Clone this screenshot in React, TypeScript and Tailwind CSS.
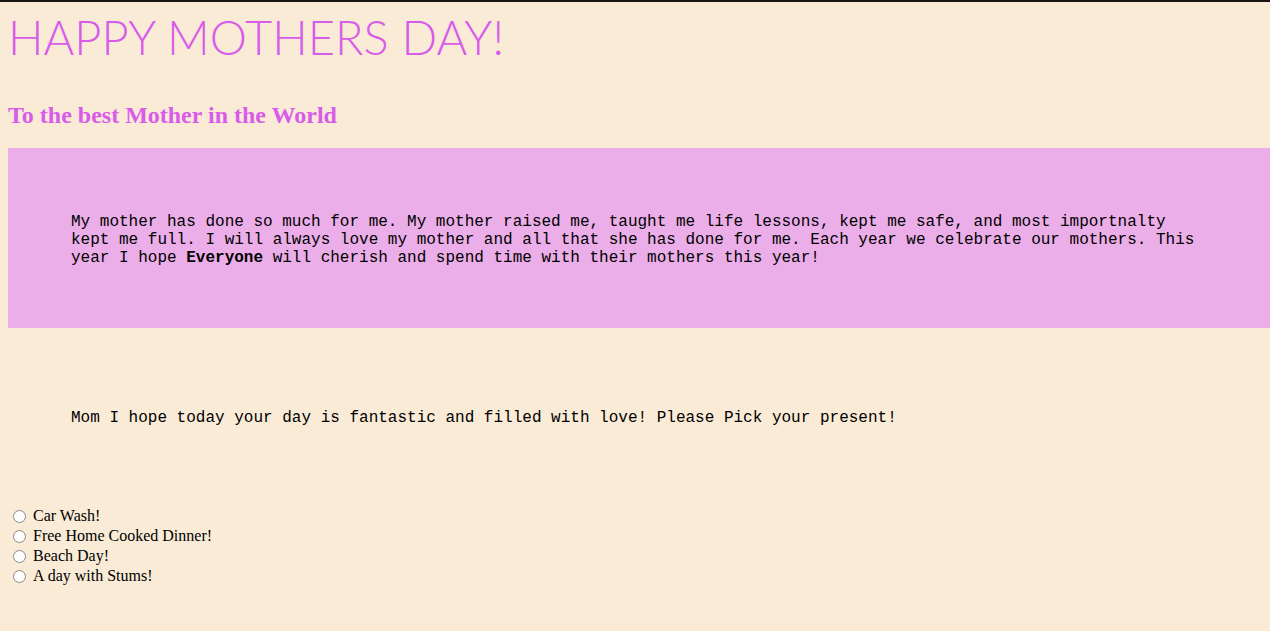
export default function App() {
  const options = ["Car Wash!", "Free Home Cooked Dinner!", "Beach Day!", "A day with Stums!"];
  return (
    <div className="min-h-[631px] bg-[#faebd7] border-t-2 border-[#1c1515] overflow-hidden">
      <div className="px-2">
        <h1 className="text-[47px] leading-[58px] text-[#d95ce9] mt-[6px] font-light font-['Lato','Open_Sans',sans-serif]">
          HAPPY MOTHERS DAY!
        </h1>
        <h2 className="text-[24px] leading-[28px] font-bold text-[#d95ce9] mt-[35px] font-['Liberation_Serif',serif]">
          To the best Mother in the World
        </h2>
        <div className="mt-[19px] mr-[-8px] bg-[#ebaee8] px-[63px] pt-[65px] pb-[61px] text-[16px] leading-[18px] text-black font-['Liberation_Mono',monospace]">
          <p>
            My mother has done so much for me. My mother raised me, taught me life lessons, kept me safe, and most importnalty kept me full. I will always love my mother and all that she has done for me. Each year we celebrate our mothers. This year I hope <b>Everyone</b> will cherish and spend time with their mothers this year!
          </p>
        </div>
        <div className="mt-[16px] px-[63px] pt-[65px] pb-[61px] text-[16px] leading-[18px] text-black font-['Liberation_Mono',monospace]">
          <p>Mom I hope today your day is fantastic and filled with love! Please Pick your present!</p>
        </div>
        <div className="mt-[18px] flex flex-col text-[16px] text-black font-['Liberation_Serif',serif]">
          {options.map((o) => (
            <label key={o} className="flex items-center h-[20px]">
              <span className="ml-[5px] mr-[7px] w-[13px] h-[13px] rounded-full border border-[#8a8a8a] bg-white inline-block" />
              <span>{o}</span>
            </label>
          ))}
        </div>
      </div>
    </div>
  );
}
